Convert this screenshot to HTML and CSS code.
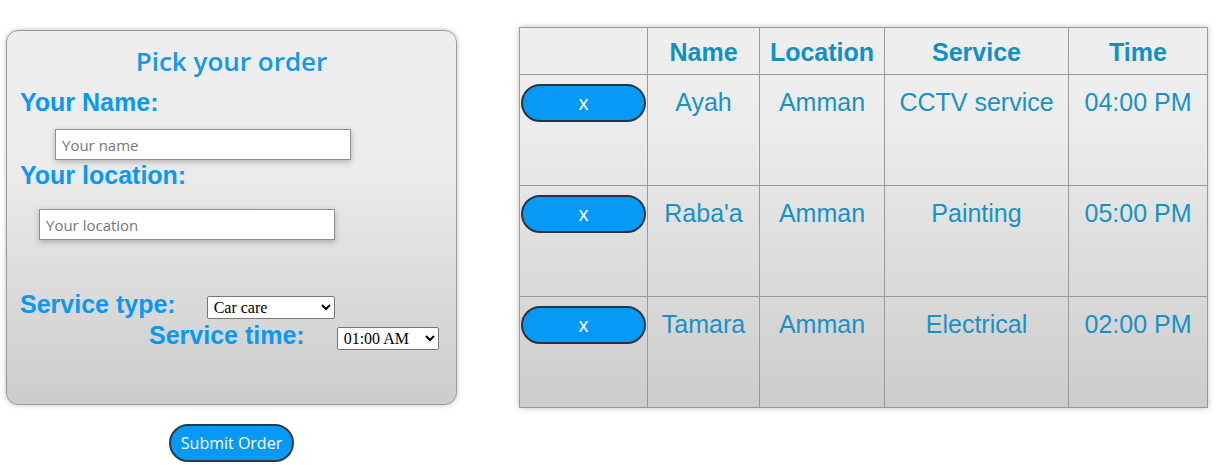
FILE: index.html
```html
<!DOCTYPE html>
<html>
<head>
<meta charset="utf-8">
<link rel="stylesheet" href="styles.css">
</head>
<body>
<div class="page">
  <div class="left">
    <form class="card">
      <h1 class="title">Pick your order</h1>
      <label class="lbl">Your Name:</label>
      <input class="txt txt-name" type="text" placeholder="Your name">
      <label class="lbl">Your location:</label>
      <input class="txt txt-loc" type="text" placeholder="Your location">
      <div class="row row-type">
        <label class="lbl">Service type:</label>
        <select class="sel sel-type"><option>Car care</option></select>
      </div>
      <div class="row row-time">
        <label class="lbl">Service time:</label>
        <select class="sel sel-time"><option>01:00 AM</option></select>
      </div>
    </form>
    <button class="submit" type="button">Submit Order</button>
  </div>
  <table class="orders">
    <colgroup>
      <col class="c1"><col class="c2"><col class="c3"><col class="c4"><col class="c5">
    </colgroup>
    <thead>
      <tr><th></th><th>Name</th><th>Location</th><th>Service</th><th>Time</th></tr>
    </thead>
    <tbody>
      <tr><td class="act"><button class="del" type="button">x</button></td><td>Ayah</td><td>Amman</td><td>CCTV service</td><td>04:00 PM</td></tr>
      <tr><td class="act"><button class="del" type="button">x</button></td><td>Raba'a</td><td>Amman</td><td>Painting</td><td>05:00 PM</td></tr>
      <tr><td class="act"><button class="del" type="button">x</button></td><td>Tamara</td><td>Amman</td><td>Electrical</td><td>02:00 PM</td></tr>
    </tbody>
  </table>
</div>
</body>
</html>
```
FILE: styles.css
```css
html, body {
  margin: 0;
  padding: 0;
  background: #fff;
}
body {
  font-family: "Liberation Sans", Arial, sans-serif;
}
.page {
  display: flex;
  align-items: flex-start;
  padding: 27px 0 0 6px;
  gap: 62px;
}
.left {
  width: 451px;
  display: flex;
  flex-direction: column;
  align-items: center;
  padding-top: 3px;
}
.card {
  box-sizing: border-box;
  width: 451px;
  height: 375px;
  border: 1px solid #9a9a9a;
  border-radius: 12px;
  background: linear-gradient(#eeeeee 0%, #ececec 35%, #cccccc 100%);
  box-shadow: 0 0 5px rgba(0, 0, 0, 0.25);
  padding: 13px 0 0 13px;
  margin: 0;
  display: flex;
  flex-direction: column;
  align-items: flex-start;
}
.title {
  align-self: stretch;
  margin: 0 13px 10px 0;
  text-align: center;
  font-family: "Open Sans", sans-serif;
  font-weight: 600;
  font-size: 26px;
  line-height: 34px;
  color: #1697ee;
  letter-spacing: 0;
}
.lbl {
  font-family: "Liberation Sans", Arial, sans-serif;
  font-weight: bold;
  font-size: 25px;
  line-height: 28px;
  color: #0b98f2;
  white-space: nowrap;
}
.txt {
  box-sizing: border-box;
  width: 296px;
  height: 31px;
  border: 1px solid #8f8f8f;
  background: #fff;
  box-shadow: 0 2px 6px rgba(0, 0, 0, 0.25);
  padding: 0 6px;
  font-family: "Open Sans", sans-serif;
  font-size: 15px;
  color: #333;
  outline: none;
}
.txt::placeholder {
  color: #777;
}
.txt-name {
  margin: 13px 0 1px 35px;
}
.txt-loc {
  margin: 20px 0 0 19px;
}
.row {
  display: flex;
  align-items: flex-start;
}
.row-type {
  margin-top: 50px;
}
.row-type .sel {
  margin: 6px 0 0 31px;
}
.row-time {
  margin: 2px 0 0 129px;
}
.row-time .sel {
  margin: 6px 0 0 32px;
}
.sel {
  box-sizing: border-box;
  height: 23px;
  border: 1px solid #767676;
  border-radius: 2px;
  background: #fff;
  font-family: "Liberation Serif", "Times New Roman", serif;
  font-size: 16px;
  color: #000;
  padding: 0 2px;
}
.sel-type {
  width: 128px;
}
.sel-time {
  width: 102px;
}
.submit {
  margin-top: 19px;
  box-sizing: border-box;
  width: 125px;
  height: 38px;
  border: 2px solid #2a3a48;
  border-radius: 20px;
  background: #0699f5;
  color: #fff;
  font-family: "Open Sans", sans-serif;
  font-size: 16px;
  padding: 0;
  cursor: pointer;
}
.orders {
  border-collapse: collapse;
  table-layout: fixed;
  width: 688px;
  background: linear-gradient(#eeeeee 0%, #ececec 25%, #cccccc 100%);
  box-shadow: 0 0 6px rgba(0, 0, 0, 0.25);
  color: #1892c6;
}
.c1 { width: 128px; }
.c2 { width: 112px; }
.c3 { width: 125px; }
.c4 { width: 184px; }
.c5 { width: 139px; }
.orders th,
.orders td {
  border: 1px solid #9a9a9a;
  text-align: center;
  vertical-align: top;
  font-size: 25px;
  line-height: 28px;
  padding: 0;
  white-space: nowrap;
}
.orders th {
  height: 47px;
  padding-top: 10px;
  box-sizing: border-box;
  font-weight: bold;
  color: #1190c6;
}
.orders td {
  height: 111px;
  box-sizing: border-box;
  padding-top: 13px;
  font-weight: normal;
}
.orders td.act {
  padding: 9px 0 0 1px;
  text-align: left;
}
.del {
  display: block;
  box-sizing: border-box;
  width: 125px;
  height: 38px;
  border: 2px solid #2a3440;
  border-radius: 20px;
  background: #0699f5;
  color: #fff;
  font-family: "Liberation Sans", Arial, sans-serif;
  font-size: 20px;
  padding: 0;
  cursor: pointer;
}
```
